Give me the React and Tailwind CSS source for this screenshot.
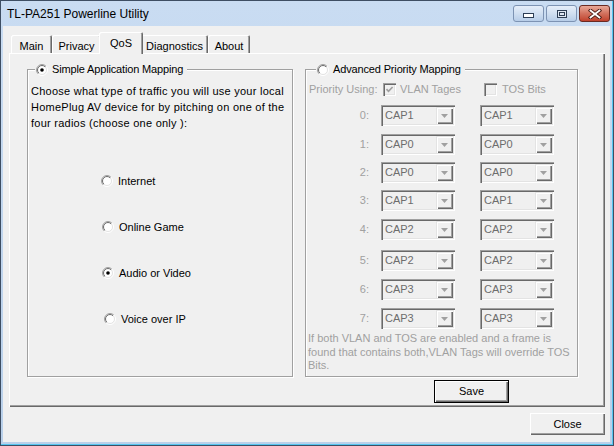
import React from 'react';

const tabs = [
    { label: 'Main', w: 'w-[41px]' },
    { label: 'Privacy', w: 'w-[49px]' },
    { label: 'QoS', w: 'w-[40px]', active: true },
    { label: 'Diagnostics', w: 'w-[67px]' },
    { label: 'About', w: 'w-[42px]' },
];

const apps = [
    { label: 'Internet', shift: 'ml-0' },
    { label: 'Online Game', shift: 'ml-[1px]' },
    { label: 'Audio or Video', shift: 'ml-[1px]', checked: true },
    { label: 'Voice over IP', shift: 'ml-[3px]' },
];

const mapping = [
    { n: 0, a: 'CAP1', b: 'CAP1', mt: 'mt-[9px]' },
    { n: 1, a: 'CAP0', b: 'CAP0', mt: 'mt-[8px]' },
    { n: 2, a: 'CAP0', b: 'CAP0', mt: 'mt-[7px]' },
    { n: 3, a: 'CAP1', b: 'CAP1', mt: 'mt-[7px]' },
    { n: 4, a: 'CAP2', b: 'CAP2', mt: 'mt-[8px]' },
    { n: 5, a: 'CAP2', b: 'CAP2', mt: 'mt-[10px]' },
    { n: 6, a: 'CAP3', b: 'CAP3', mt: 'mt-[8px]' },
    { n: 7, a: 'CAP3', b: 'CAP3', mt: 'mt-[8px]' },
];

// classic sunken radio circle
function Radio({ id, checked }) {
    return (
        <svg width="12" height="12" viewBox="0 0 12 12" className="shrink-0">
            <defs>
                <linearGradient id={`ro${id}`} x1="0" y1="0" x2="1" y2="1">
                    <stop offset="0.5" stopColor="#a0a0a0" />
                    <stop offset="0.5" stopColor="#ffffff" />
                </linearGradient>
                <linearGradient id={`ri${id}`} x1="0" y1="0" x2="1" y2="1">
                    <stop offset="0.5" stopColor="#696969" />
                    <stop offset="0.5" stopColor="#e3e3e3" />
                </linearGradient>
            </defs>
            <circle cx="6" cy="6" r="5.5" fill="none" stroke={`url(#ro${id})`} />
            <circle cx="6" cy="6" r="4.5" fill="#ffffff" stroke={`url(#ri${id})`} />
            {checked && <circle cx="6" cy="6" r="1.8" fill="#000000" />}
        </svg>
    );
}

function Checkbox({ checked }) {
    return (
        <div className="w-[13px] h-[13px] shrink-0 bg-[#f0f0f0] shadow-[inset_1px_1px_0_#a0a0a0,inset_2px_2px_0_#696969,inset_-1px_-1px_0_#ffffff,inset_-2px_-2px_0_#e3e3e3] flex items-center justify-center">
            {checked && (
                <svg width="9" height="9" viewBox="0 0 9 9">
                    <polyline points="1.5,4.2 3.5,6.3 7.6,2" fill="none" stroke="#a0a0a0" strokeWidth="1.7" />
                </svg>
            )}
        </div>
    );
}

function Combo({ value }) {
    return (
        <div className="w-[74px] h-[21px] p-[2px] flex bg-[#f0f0f0] shadow-[inset_1px_1px_0_#a0a0a0,inset_2px_2px_0_#696969,inset_-1px_-1px_0_#ffffff,inset_-2px_-2px_0_#e3e3e3]">
            <div className="flex-1 pl-[2px] flex items-center text-[11px] text-[#6d6d6d]">{value}</div>
            <div className="w-[17px] h-[17px] flex items-center justify-center shadow-[inset_1px_1px_0_#e3e3e3,inset_2px_2px_0_#ffffff,inset_-1px_-1px_0_#696969,inset_-2px_-2px_0_#a0a0a0]">
                <svg width="7" height="4" viewBox="0 0 7 4">
                    <polygon points="0,0 7,0 3.5,4" fill="#a0a0a0" />
                </svg>
            </div>
        </div>
    );
}

function GroupBox({ legend, legendLeft, width, children }) {
    return (
        <div className={`relative ${width} h-[308px] border border-[#a0a0a0] shadow-[inset_1px_1px_0_#ffffff,1px_1px_0_#ffffff]`}>
            <div className={`absolute top-[-7px] ${legendLeft} bg-[#f0f0f0] pl-[1px] pr-[4px] flex items-center gap-[4px] h-[13px]`}>
                {legend}
            </div>
            {children}
        </div>
    );
}

function TitleButton({ kind }) {
    if (kind === 'close') {
        return (
            <div className="w-[31px] h-[17px] rounded-[3px] border border-[#6a2a22] bg-gradient-to-b from-[#e8a898] via-[#d2715e] to-[#c0412c] flex items-center justify-center">
                <svg width="14" height="10" viewBox="0 0 14 10">
                    <path d="M2.5 1.5 L11.5 8.5 M11.5 1.5 L2.5 8.5" stroke="#4a1a14" strokeWidth="3.6" strokeLinecap="square" />
                    <path d="M2.5 1.5 L11.5 8.5 M11.5 1.5 L2.5 8.5" stroke="#ffffff" strokeWidth="1.8" strokeLinecap="square" />
                </svg>
            </div>
        );
    }
    return (
        <div className="w-[31px] h-[17px] rounded-[3px] border border-[#7d93b3] bg-gradient-to-b from-[#e6eef9] via-[#d0dff1] to-[#b7cde8] flex justify-center">
            {kind === 'min' ? (
                <svg width="11" height="5" viewBox="0 0 11 5" className="mt-[7px]">
                    <rect x="0.5" y="0.5" width="10" height="4" fill="#ffffff" stroke="#2d3e55" />
                </svg>
            ) : (
                <svg width="10" height="8" viewBox="0 0 10 8" className="mt-[4px]">
                    <rect x="0.5" y="0.5" width="9" height="7" fill="#dfe8f4" stroke="#2d3e55" />
                    <rect x="2.5" y="2.5" width="5" height="3" fill="none" stroke="#2d3e55" />
                </svg>
            )}
        </div>
    );
}

export default function App() {
    return (
        <div className="w-[614px] h-[446px] flex flex-col border border-[#3e4e63] bg-gradient-to-b from-[#c9dcf2] to-[#b9d0ea] shadow-[inset_-1px_-1px_0_#55c6f0] font-['Liberation_Sans',Arial,sans-serif] text-black overflow-hidden">
            {/* title bar */}
            <div className="h-[25px] shrink-0 flex justify-between pl-[6px] pr-[3px]">
                <div className="flex items-center text-[12px] text-black">TL-PA251 Powerline Utility</div>
                <div className="flex gap-[2px] pt-[4px]">
                    <TitleButton kind="min" />
                    <TitleButton kind="max" />
                    <TitleButton kind="close" />
                </div>
            </div>

            {/* client area */}
            <div className="h-[416px] ml-[2px] mr-[3px] bg-[#f0f0f0] text-[11px]">
                {/* tab strip */}
                <div className="h-[27px] pl-[8px] flex items-end">
                    {tabs.map(t => (
                        t.active ? (
                            <div key={t.label} className="relative z-10 w-[44px] h-[22px] mx-[-2px] mb-[-1px] rounded-t-[2px] bg-[#f0f0f0] shadow-[inset_1px_1px_0_#ffffff,inset_-1px_0_0_#696969,inset_-2px_0_0_#a0a0a0] flex justify-center pt-[3px]">
                                {t.label}
                            </div>
                        ) : (
                            <div key={t.label} className={`${t.w} h-[18px] rounded-t-[2px] shadow-[inset_1px_1px_0_#ffffff,inset_-1px_0_0_#696969,inset_-2px_0_0_#a0a0a0] flex justify-center pt-[3px]`}>
                                {t.label}
                            </div>
                        )
                    ))}
                </div>

                {/* tab panel */}
                <div className="ml-[6px] w-[596px] h-[354px] pt-[16px] pl-[18px] shadow-[inset_1px_1px_0_#ffffff,inset_-1px_-1px_0_#696969,inset_-2px_-2px_0_#a0a0a0]">
                    <div className="flex gap-[12px]">
                        <GroupBox
                            width="w-[266px]"
                            legendLeft="left-[7px]"
                            legend={<><Radio id="simple" checked /><span className="tracking-[-0.15px]">Simple Application Mapping</span></>}
                        >
                            <div className="pt-[13px] pl-[3px] leading-[16px] tracking-[0.25px]">
                                Choose what type of traffic you will use your local<br />
                                HomePlug AV device for by pitching on one of the<br />
                                four radios (choose one only ):
                            </div>
                            <div className="mt-[42px] pl-[73px] flex flex-col gap-[30px]">
                                {apps.map((a, i) => (
                                    <div key={a.label} className={`h-[16px] flex items-center gap-[5px] ${a.shift}`}>
                                        <Radio id={`app${i}`} checked={a.checked} />
                                        <span>{a.label}</span>
                                    </div>
                                ))}
                            </div>
                        </GroupBox>

                        <GroupBox
                            width="w-[273px]"
                            legendLeft="left-[10px]"
                            legend={<><Radio id="adv" /><span className="tracking-[-0.15px]">Advanced Priority Mapping</span></>}
                        >
                            <div className="pt-[13px] pl-[3px] h-[26px] flex items-center text-[#a0a0a0]">
                                <span className="w-[74px]">Priority Using:</span>
                                <Checkbox checked />
                                <span className="ml-[4px] w-[84px]">VLAN Tages</span>
                                <Checkbox />
                                <span className="ml-[5px]">TOS Bits</span>
                            </div>
                            {mapping.map(r => (
                                <div key={r.n} className={`${r.mt} h-[21px] flex items-center`}>
                                    <span className="w-[63px] text-right text-[#a0a0a0]">{r.n}:</span>
                                    <div className="ml-[12px]"><Combo value={r.a} /></div>
                                    <div className="ml-[25px]"><Combo value={r.b} /></div>
                                </div>
                            ))}
                            <div className="mt-[3px] pl-[2px] leading-[13.5px] text-[#a0a0a0]">
                                If both VLAN and TOS are enabled and a frame is<br />
                                found that contains both,VLAN Tags will override TOS<br />
                                Bits.
                            </div>
                        </GroupBox>
                    </div>

                    <button className="mt-[3px] ml-[407px] w-[75px] h-[23px] flex items-center justify-center border border-black bg-[#f0f0f0] shadow-[inset_1px_1px_0_#ffffff,inset_-1px_-1px_0_#696969,inset_-2px_-2px_0_#a0a0a0]">
                        Save
                    </button>
                </div>

                <div className="mt-[6px] pr-[5px] flex justify-end">
                    <button className="w-[75px] h-[22px] flex items-center justify-center bg-[#f0f0f0] shadow-[inset_1px_1px_0_#ffffff,inset_-1px_-1px_0_#696969,inset_-2px_-2px_0_#a0a0a0]">
                        Close
                    </button>
                </div>
            </div>
        </div>
    );
}
